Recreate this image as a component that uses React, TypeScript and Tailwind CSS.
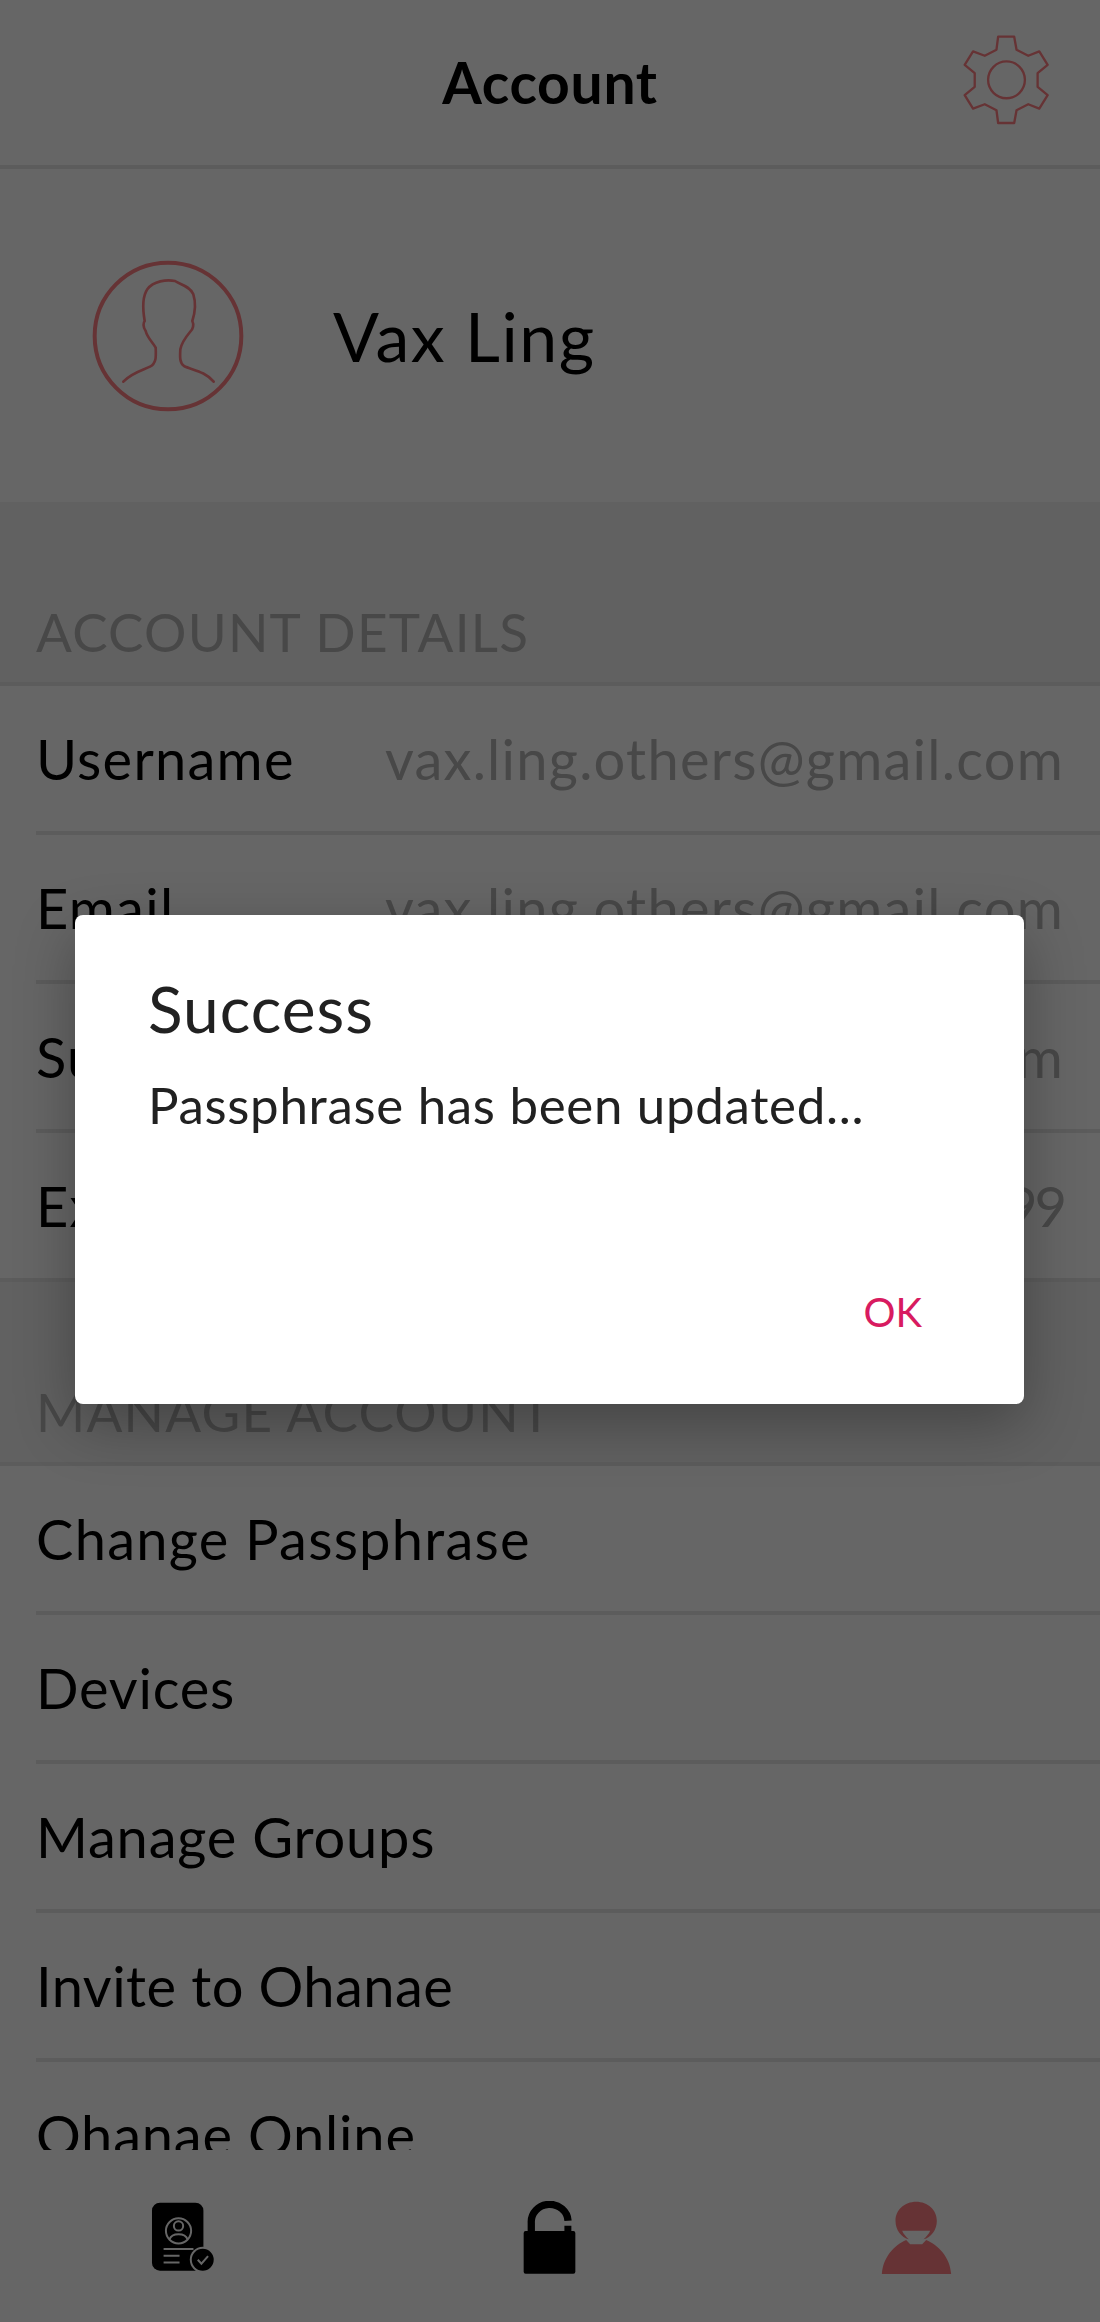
import React from 'react';

const detailRows = [
  { label: 'Username', value: 'vax.ling.others@gmail.com', valueClass: 'text-[#b3b3b3]' },
  { label: 'Email', value: 'vax.ling.others@gmail.com', valueClass: 'text-[#b3b3b3]' },
  { label: 'Subscription', value: 'Premium Ohanae.com', valueClass: 'text-[#b3b3b3]' },
  { label: 'Expiry', value: '31 December 9999', valueClass: 'text-[#b3b3b3] tracking-[-3px]' },
];

const manageRows = [
  { label: 'Change Passphrase', className: 'tracking-[1.25px]' },
  { label: 'Devices', className: 'tracking-[0.8px]' },
  { label: 'Manage Groups', className: 'tracking-[0.8px]' },
  { label: 'Invite to Ohanae', className: 'tracking-[0.45px]' },
  { label: 'Ohanae Online', className: 'tracking-[0.8px]' },
];

const GearIcon = () => (
  <svg viewBox="190 100 260 275" className="w-[87px] h-[92px]" fill="none" stroke="#ff8084" strokeWidth="7" strokeLinejoin="round">
    <path d="M295 108 L343 108 L350 147 L385 165 L418 152 L443 192 L413 217 L413 258 L443 283 L418 323 L385 310 L350 328 L343 366 L295 366 L290 328 L255 310 L220 323 L195 283 L225 258 L225 217 L195 192 L220 152 L255 165 L290 147 Z" />
    <circle cx="320" cy="237" r="55" />
  </svg>
);

const AvatarIcon = () => (
  <svg viewBox="96 62 456 456" className="w-[152px] h-[152px]" fill="none" stroke="#ff8084" strokeLinecap="round">
    <circle cx="324" cy="290" r="220" strokeWidth="12" />
    <path
      strokeWidth="8"
      d="M190 427 C215 400 250 392 270 382 C290 372 288 350 287 325 C275 305 262 295 257 275 C248 262 250 250 254 245 C248 210 245 175 262 150 C280 125 320 120 345 125 C360 135 390 140 400 165 C408 190 405 220 397 245 C402 255 400 270 390 278 C380 290 365 310 361 330 C360 350 358 370 372 380 C395 392 435 395 461 427"
    />
  </svg>
);

const DocIcon = () => (
  <svg viewBox="60 65 200 220" className="w-[67px] h-[73px]">
    <rect x="65" y="70" width="155" height="205" rx="24" fill="#000" />
    <circle cx="145" cy="155" r="38" fill="none" stroke="#fff" strokeWidth="6" />
    <circle cx="145" cy="140" r="14" fill="none" stroke="#fff" strokeWidth="6" />
    <path d="M118 180 C125 160 165 160 172 180" fill="none" stroke="#fff" strokeWidth="6" />
    <path d="M100 210 H190 M100 230 H148 M100 250 H148" stroke="#fff" strokeWidth="6" />
    <circle cx="218" cy="242" r="39" fill="#fff" />
    <circle cx="218" cy="242" r="33" fill="#000" />
    <path d="M203 242 L214 254 L234 231" fill="none" stroke="#fff" strokeWidth="6" />
  </svg>
);

const LockIcon = () => (
  <svg viewBox="70 63 160 222" className="w-[53px] h-[74px]">
    <rect x="72" y="153" width="156" height="129" rx="6" fill="#000" />
    <path d="M95 156 V128 A55 52 0 0 1 206 122" fill="none" stroke="#000" strokeWidth="22" />
    <rect x="195" y="137" width="21" height="18" fill="#000" />
  </svg>
);

const PersonIcon = () => (
  <svg viewBox="65 63 212 222" className="w-[71px] h-[74px]" fill="#ff8084">
    <path d="M170 65 C205 65 232 90 232 122 C232 150 215 172 192 178 C200 170 208 162 212 152 Q170 152 128 152 C132 162 140 170 148 178 C125 172 108 150 108 122 C108 90 135 65 170 65 Z" />
    <path d="M67 282 C70 232 105 195 140 180 L152 193 H188 L200 180 C236 195 272 232 275 282 Z" />
  </svg>
);

const SectionLabel = ({ children }: { children: React.ReactNode }) => (
  <div className="h-[184px] bg-[#f2f2f2] pl-9 flex items-end pb-[24px] text-[53px] tracking-[1.25px] leading-none text-[#b3b3b3] border-b-4 border-[#e6e6e6]">
    {children}
  </div>
);

export default function App() {
  return (
    <div className="relative h-[2322px] w-[1100px] overflow-hidden bg-white font-['Lato',sans-serif] text-black flex flex-col">
      <header className="relative h-[169px] shrink-0 flex items-center justify-center border-b-4 border-[#e6e6e6]">
        <h1 className="text-[57px] tracking-[0.7px] font-bold">Account</h1>
        <div className="absolute right-[50px] top-[34px]">
          <GearIcon />
        </div>
      </header>

      <div className="flex-1 min-h-0 overflow-hidden">
        <section className="h-[333px] flex items-center pl-[92px] gap-[89px]">
          <AvatarIcon />
          <span className="text-[68px] tracking-[1.5px]">Vax Ling</span>
        </section>

        <SectionLabel>ACCOUNT DETAILS</SectionLabel>
        {detailRows.map((row, i) => (
          <div key={row.label} className={i === detailRows.length - 1 ? 'border-b-4 border-[#e6e6e6] pl-9' : 'pl-9'}>
            <div className={i === detailRows.length - 1 ? 'h-[145px] flex items-center justify-between pr-9 text-[56px] tracking-[1.25px]' : 'h-[149px] flex items-center justify-between pr-9 border-b-4 border-[#e6e6e6] text-[56px] tracking-[1.25px]'}>
              <span>{row.label}</span>
              <span className={row.valueClass}>{row.value}</span>
            </div>
          </div>
        ))}

        <SectionLabel>MANAGE ACCOUNT</SectionLabel>
        {manageRows.map((row) => (
          <div key={row.label} className="pl-9">
            <div className="h-[149px] flex items-center border-b-4 border-[#e6e6e6] text-[56px]">
              <span className={row.className}>{row.label}</span>
            </div>
          </div>
        ))}
      </div>

      <nav className="h-[172px] shrink-0 bg-white relative z-10 grid grid-cols-3 items-center pt-[3px]">
        <div className="flex justify-center"><DocIcon /></div>
        <div className="flex justify-center"><LockIcon /></div>
        <div className="flex justify-center"><PersonIcon /></div>
      </nav>

      {/* dialog */}
      <div className="absolute inset-0 z-20 bg-black/60 pt-[915px] pl-[75px]">
        <div className="w-[949px] h-[489px] bg-white rounded-[8px] shadow-[0_20px_60px_rgba(0,0,0,0.3)] pt-[58px] pl-[73px] pr-[102px] flex flex-col">
          <h2 className="text-[64px] tracking-[1px] leading-[72px] text-[#212121]">Success</h2>
          <p className="mt-[26px] text-[51px] tracking-[0.7px] leading-[68px] text-[#212121]">Passphrase has been updated...</p>
          <div className="mt-auto pb-[64px] flex justify-end">
            <span className="text-[40px] leading-[56px] text-[#d81b60]">OK</span>
          </div>
        </div>
      </div>
    </div>
  );
}
